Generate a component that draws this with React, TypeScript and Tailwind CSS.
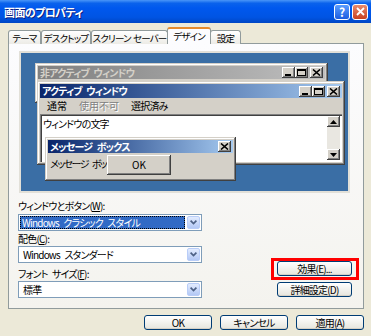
import React from "react";

const jp = "font-['Noto_Sans_CJK_JP','Noto_Sans_CJK_SC',sans-serif] [font-feature-settings:'palt']";

const raised =
  "shadow-[inset_-1px_-1px_0_#404040,inset_1px_1px_0_#ffffff,inset_-2px_-2px_0_#808080]";
const frame =
  "shadow-[inset_-1px_-1px_0_#404040,inset_1px_1px_0_#D4D0C8,inset_-2px_-2px_0_#808080,inset_2px_2px_0_#ffffff]";

function CapButton({ kind }: { kind: "min" | "max" | "close" }) {
  return (
    <div className={`flex h-[11px] w-[13px] items-center justify-center bg-[#D4D0C8] ${raised}`}>
      <svg width="9" height="7" viewBox="0 0 9 7">
        {kind === "min" && <rect x="1" y="5" width="6" height="2" fill="#000" />}
        {kind === "max" && (
          <>
            <rect x="0.5" y="0.5" width="8" height="6" fill="none" stroke="#000" />
            <rect x="0" y="0" width="9" height="2" fill="#000" />
          </>
        )}
        {kind === "close" && (
          <path d="M1 0.5 L8 6.5 M8 0.5 L1 6.5" stroke="#000" strokeWidth="1.6" />
        )}
      </svg>
    </div>
  );
}

function ArrowBtn({ down }: { down?: boolean }) {
  return (
    <div className={`flex h-[11px] w-[13px] items-center justify-center bg-[#D4D0C8] ${raised}`}>
      <svg width="7" height="4" viewBox="0 0 7 4">
        <path d={down ? "M0 0 H7 L3.5 4 Z" : "M0 4 H7 L3.5 0 Z"} fill="#000" />
      </svg>
    </div>
  );
}

function Chevron() {
  return (
    <svg width="7" height="5" viewBox="0 0 7 5">
      <path d="M0.6 0.6 L3.5 3.5 L6.4 0.6" fill="none" stroke="#4D6185" strokeWidth="1.7" />
    </svg>
  );
}

function Combo({ value, selected }: { value: string; selected?: boolean }) {
  return (
    <div className="flex h-[17px] w-[184px] items-center border border-[#7F9DB9] bg-white p-px">
      <div className="flex h-full flex-1 items-center pr-[2px]">
        {selected ? (
          <span className="flex h-full w-full items-center bg-[#316AC5] px-[2px] text-white outline-1 outline-dotted -outline-offset-1 outline-[#000]">
            {value}
          </span>
        ) : (
          <span className="px-[3px] text-black">{value}</span>
        )}
      </div>
      <div className="flex h-[13px] w-[13px] items-center justify-center rounded-[2px] border border-[#B9CDF8] bg-linear-to-b from-[#E3ECFE] to-[#B3C8F5]">
        <Chevron />
      </div>
    </div>
  );
}

function XpButton({ label, w }: { label: string; w: string }) {
  return (
    <div
      className={`flex h-[15px] ${w} items-center justify-center rounded-[3px] border border-[#003C74] bg-linear-to-b from-white to-[#E6E5DD] text-black shadow-[inset_0_-1px_0_#D6D0C5]`}
    >
      {label}
    </div>
  );
}

export default function App() {
  const tabs = [
    { label: "テーマ", w: "w-[33px]" },
    { label: "デスクトップ", w: "w-[50px]" },
    { label: "スクリーン セーバー", w: "w-[77px]" },
    { label: "デザイン", w: "w-[44px]", active: true },
    { label: "設定", w: "w-[31px]" },
  ];

  return (
    <div className={`relative h-[336px] w-[371px] overflow-hidden bg-[#ECE9D8] text-[10px] leading-[12px] tracking-[-0.8px] [word-spacing:3px] ${jp}`}>
      {/* title bar */}
      <div className="flex h-[23px] items-center justify-between bg-[linear-gradient(180deg,#4A96F8_0%,#0A62EC_14%,#0058EE_35%,#0054E3_75%,#0046C4_100%)] pl-[4px] pr-[3px]">
        <span className="text-[11px] font-bold tracking-[-0.6px] text-white [text-shadow:1px_1px_#0A1E80]">画面のプロパティ</span>
        <div className="flex gap-[2px]">
          <div className="flex h-[16px] w-[16px] items-center justify-center rounded-[3px] border border-white bg-linear-to-b from-[#5A9CFF] to-[#1B5CE0] text-[12px] font-bold leading-none tracking-normal text-white">
            ?
          </div>
          <div className="flex h-[16px] w-[16px] items-center justify-center rounded-[3px] border border-white bg-linear-to-b from-[#E88A6C] to-[#C8401E]">
            <svg width="9" height="9" viewBox="0 0 9 9">
              <path d="M1 1 L8 8 M8 1 L1 8" stroke="#fff" strokeWidth="1.8" />
            </svg>
          </div>
        </div>
      </div>

      {/* tabs */}
      <div className="relative z-10 -mb-px ml-[8px] mt-[4px] flex h-[17px] items-end whitespace-nowrap text-[9.5px] [word-spacing:1px]">
        {tabs.map((t) =>
          t.active ? (
            <div
              key={t.label}
              className={`-mx-[1px] flex h-[17px] ${t.w} items-center justify-center rounded-t-[3px] border-x border-t-2 border-x-[#919B9C] border-t-[#E68B2C] bg-[#FCFCFE] pb-px text-black`}
            >
              {t.label}
            </div>
          ) : (
            <div
              key={t.label}
              className={`flex h-[14px] ${t.w} items-center justify-center rounded-t-[3px] border border-b-0 border-[#919B9C] bg-linear-to-b from-white to-[#ECEBE6] text-black`}
            >
              {t.label}
            </div>
          )
        )}
      </div>

      {/* tab panel */}
      <div className="ml-[8px] h-[266px] w-[356px] border border-[#919B9C] bg-linear-to-b from-[#FCFCFE] to-[#F4F3EE]">
        {/* preview */}
        <div className="ml-[10px] mt-[7px] h-[142px] w-[331px] bg-[#E2E0D8] p-[2px]">
          <div className="relative h-[138px] w-[327px] overflow-hidden bg-[#3A6EA5] whitespace-nowrap">
            {/* inactive window */}
            <div className={`absolute left-[14px] top-[10px] h-[40px] w-[293px] bg-[#D4D0C8] p-[3px] ${frame}`}>
              <div className="flex h-[13px] items-center justify-between bg-linear-to-r from-[#808080] to-[#C0C0C0] pl-[2px] pr-[2px]">
                <span className="font-bold text-[#D4D0C8]">非アクティブ ウィンドウ</span>
                <div className="flex">
                  <CapButton kind="min" />
                  <CapButton kind="max" />
                  <div className="w-[2px]" />
                  <CapButton kind="close" />
                </div>
              </div>
            </div>

            {/* active window */}
            <div className={`absolute left-[16px] top-[28px] flex h-[84px] w-[308px] flex-col bg-[#D4D0C8] p-[3px] ${frame}`}>
              <div className="flex h-[14px] items-center justify-between bg-linear-to-r from-[#0A246A] to-[#A6CAF0] pl-[2px] pr-[2px]">
                <span className="font-bold text-white">アクティブ ウィンドウ</span>
                <div className="flex">
                  <CapButton kind="min" />
                  <CapButton kind="max" />
                  <div className="w-[2px]" />
                  <CapButton kind="close" />
                </div>
              </div>
              <div className="flex h-[16px] items-center gap-[12px] pl-[7px] tracking-normal">
                <span className="text-black">通常</span>
                <span className="text-[#808080] [text-shadow:1px_1px_#fff]">使用不可</span>
                <span className="tracking-[-0.8px] text-black">選択済み</span>
              </div>
              <div className="flex flex-1 bg-white shadow-[inset_1px_1px_0_#808080,inset_2px_2px_0_#404040,inset_-1px_-1px_0_#fff]">
                <div className="flex-1 pl-[3px] pt-[4px] text-black">ウィンドウの文字</div>
                <div className="mb-[2px] mr-[2px] mt-[2px] flex w-[13px] flex-col justify-between bg-[#E9E7E1]">
                  <ArrowBtn />
                  <ArrowBtn down />
                </div>
              </div>
            </div>

            {/* message box */}
            <div className={`absolute left-[24px] top-[84px] flex h-[44px] w-[191px] flex-col bg-[#D4D0C8] p-[3px] ${frame}`}>
              <div className="flex h-[13px] items-center justify-between bg-linear-to-r from-[#0A246A] to-[#A6CAF0] pl-[2px] pr-[2px]">
                <span className="font-bold text-white">メッセージ ボックス</span>
                <CapButton kind="close" />
              </div>
              <div className="relative flex-1">
                <span className="absolute left-[2px] top-[5px] tracking-[-1.5px] text-black">メッセージ ボックス</span>
                <div className={`absolute left-[59px] top-[2px] flex h-[20px] w-[64px] items-center justify-center bg-[#D4D0C8] tracking-normal text-black ${raised}`}>
                  OK
                </div>
              </div>
            </div>
          </div>
        </div>

        {/* lower form */}
        <div className="flex">
          <div className="ml-[9px] flex w-[184px] flex-col">
            <div className="mt-[7px] h-[14px] text-black">ウィンドウとボタン(<span className="underline">W</span>):</div>
            <Combo value="Windows クラシック スタイル" selected />
            <div className="mt-[2px] h-[13px] text-black">配色(<span className="underline">C</span>):</div>
            <Combo value="Windows スタンダード" />
            <div className="mt-[5px] h-[13px] text-black">フォント サイズ(<span className="underline">F</span>):</div>
            <Combo value="標準" />
          </div>
          <div className="ml-auto mr-[11px] mt-[68px] flex flex-col gap-[6px]">
            <XpButton label="効果(E)..." w="w-[75px]" />
            <XpButton label="詳細設定(D)" w="w-[75px]" />
          </div>
        </div>
      </div>

      {/* bottom buttons */}
      <div className="mt-[6px] flex justify-end gap-[8px] pr-[7px]">
        <XpButton label="OK" w="w-[68px]" />
        <XpButton label="キャンセル" w="w-[68px]" />
        <XpButton label="適用(A)" w="w-[68px]" />
      </div>

      {/* highlight */}
      <div className="absolute left-[271px] top-[258px] h-[22px] w-[88px] border-[3px] border-[#FF0000]" />
    </div>
  );
}
